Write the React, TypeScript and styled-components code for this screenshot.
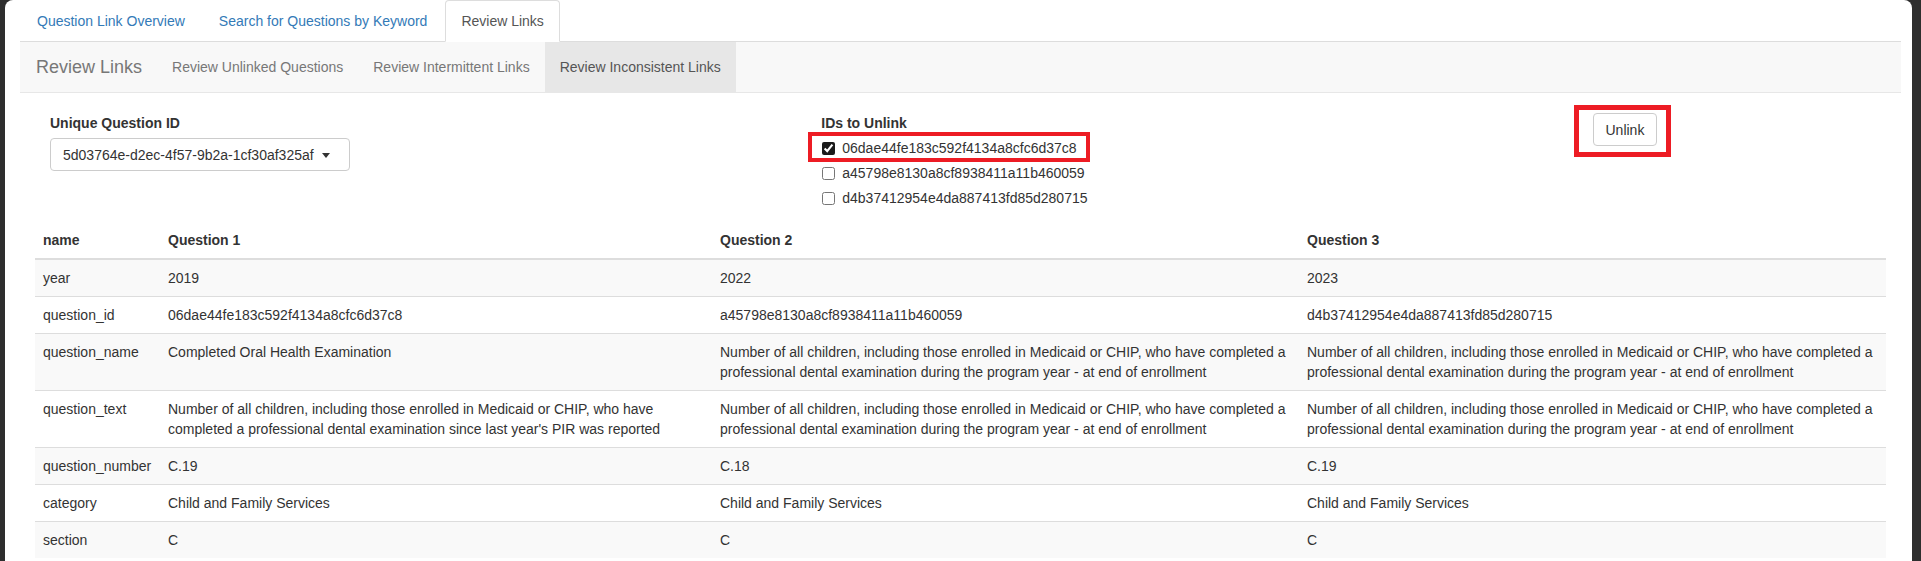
import React from "react";
import styled, { createGlobalStyle, css } from "styled-components";

const GlobalStyle = createGlobalStyle`
  html, body {
    margin: 0;
    padding: 0;
    height: 561px;
    overflow: hidden;
    background: #2e2e2e;
  }
  body {
    font-family: "Liberation Sans", Arial, Helvetica, sans-serif;
    font-size: 14px;
    line-height: 20px;
    color: #333;
  }
  * { box-sizing: border-box; }
`;

const Frame = styled.div`
  margin: 0 9px 0 5px;
  height: 561px;
  overflow: hidden;
  background: #fff;
  border-radius: 8px 8px 0 0;
  padding: 0 11px 0 15px;
`;

const TabList = styled.div`
  display: flex;
  padding-left: 1px;
  border-bottom: 1px solid #ddd;
`;

const Tab = styled.div<{ $active?: boolean }>`
  padding: 10px 15px;
  line-height: 20px;
  margin-right: 2px;
  margin-bottom: -1px;
  border: 1px solid transparent;
  border-radius: 4px 4px 0 0;
  color: #337ab7;
  white-space: nowrap;
  ${(p) =>
    p.$active &&
    css`
      color: #555;
      background: #fff;
      border-color: #ddd;
      border-bottom-color: transparent;
    `}
`;

const NavBar = styled.div`
  display: flex;
  align-items: stretch;
  margin-top: -1px;
  height: 52px;
  background: #f8f8f8;
  border-top: 1px solid #ddd;
  border-bottom: 1px solid #e7e7e7;
  padding-left: 1px;
  margin-bottom: 20px;
`;

const Brand = styled.div`
  padding: 15px;
  font-size: 18px;
  line-height: 20px;
  color: #777;
  white-space: nowrap;
`;

const NavLink = styled.div<{ $active?: boolean }>`
  padding: 15px;
  line-height: 20px;
  color: ${(p) => (p.$active ? "#555" : "#777")};
  background: ${(p) => (p.$active ? "#e7e7e7" : "transparent")};
  white-space: nowrap;
`;

const Pane = styled.div`
  padding: 0 15px;
`;

const FormRow = styled.div`
  display: grid;
  grid-template-columns: 5fr 5fr 2fr;
`;

const Col = styled.div`
  position: relative;
  padding: 0 15px;
`;

const Label = styled.div`
  font-weight: bold;
  line-height: 20px;
  margin-bottom: 5px;
  color: #333;
`;

const SelectBox = styled.div`
  width: 300px;
  height: 33px;
  display: flex;
  align-items: center;
  gap: 8px;
  padding: 0 19px 0 12px;
  border: 1px solid #ccc;
  border-radius: 4px;
  background: #fff;
  color: #333;
  white-space: nowrap;
`;

const Caret = styled.span`
  width: 0;
  height: 0;
  border-style: solid;
  border-width: 5px 4px 0 4px;
  border-color: #333 transparent transparent transparent;
  margin-top: 1px;
`;

const CheckRow = styled.label`
  display: flex;
  align-items: center;
  height: 20px;
  & + & {
    margin-top: 5px;
  }
`;

const CheckInput = styled.input`
  width: 13px;
  height: 13px;
  margin: 0 7px 0 1px;
  accent-color: #1a1a1a;
`;

const Highlight = styled.div<{ $l: number; $t: number; $w: number; $h: number; $b: number }>`
  position: absolute;
  left: ${(p) => p.$l}px;
  top: ${(p) => p.$t}px;
  width: ${(p) => p.$w}px;
  height: ${(p) => p.$h}px;
  border: ${(p) => p.$b}px solid #ed1c24;
  pointer-events: none;
`;

const Button = styled.button`
  font-family: inherit;
  font-size: 14px;
  line-height: 20px;
  padding: 6px 12px;
  height: 33px;
  color: #333;
  background: #fff;
  border: 1px solid #ccc;
  border-radius: 4px;
`;

const Table = styled.table`
  width: 100%;
  margin-top: 14px;
  border-collapse: collapse;
  table-layout: fixed;
`;

const Th = styled.th`
  text-align: left;
  font-weight: bold;
  padding: 8px;
  line-height: 20px;
  vertical-align: bottom;
  border-bottom: 2px solid #ddd;
`;

const Tr = styled.tr<{ $striped?: boolean }>`
  background: ${(p) => (p.$striped ? "#f9f9f9" : "#fff")};
`;

const Td = styled.td`
  padding: 8px;
  line-height: 20px;
  vertical-align: top;
  border-top: 1px solid #ddd;
`;

const longA =
  "Number of all children, including those enrolled in Medicaid or CHIP, who have completed a professional dental examination during the program year - at end of enrollment";

const rows: string[][] = [
  ["year", "2019", "2022", "2023"],
  [
    "question_id",
    "06dae44fe183c592f4134a8cfc6d37c8",
    "a45798e8130a8cf8938411a11b460059",
    "d4b37412954e4da887413fd85d280715",
  ],
  ["question_name", "Completed Oral Health Examination", longA, longA],
  [
    "question_text",
    "Number of all children, including those enrolled in Medicaid or CHIP, who have completed a professional dental examination since last year's PIR was reported",
    longA,
    longA,
  ],
  ["question_number", "C.19", "C.18", "C.19"],
  ["category", "Child and Family Services", "Child and Family Services", "Child and Family Services"],
  ["section", "C", "C", "C"],
];

const ids = [
  "06dae44fe183c592f4134a8cfc6d37c8",
  "a45798e8130a8cf8938411a11b460059",
  "d4b37412954e4da887413fd85d280715",
];

export default function App() {
  return (
    <>
      <GlobalStyle />
      <Frame>
        <TabList>
          <Tab>Question Link Overview</Tab>
          <Tab>Search for Questions by Keyword</Tab>
          <Tab $active>Review Links</Tab>
        </TabList>
        <NavBar>
          <Brand>Review Links</Brand>
          <NavLink>Review Unlinked Questions</NavLink>
          <NavLink>Review Intermittent Links</NavLink>
          <NavLink $active>Review Inconsistent Links</NavLink>
        </NavBar>
        <Pane>
          <FormRow>
            <Col>
              <Label>Unique Question ID</Label>
              <SelectBox>
                <span>5d03764e-d2ec-4f57-9b2a-1cf30af325af</span>
                <Caret />
              </SelectBox>
            </Col>
            <Col>
              <Label>IDs to Unlink</Label>
              {ids.map((id, i) => (
                <CheckRow key={id}>
                  <CheckInput type="checkbox" defaultChecked={i === 0} />
                  <span>{id}</span>
                </CheckRow>
              ))}
              <Highlight $l={2} $t={19} $w={282} $h={30} $b={4} />
            </Col>
            <Col>
              <Button>Unlink</Button>
              <Highlight $l={-4} $t={-8} $w={97} $h={52} $b={5} />
            </Col>
          </FormRow>
          <Table>
            <colgroup>
              <col style={{ width: 125 }} />
              <col style={{ width: 552 }} />
              <col style={{ width: 587 }} />
              <col style={{ width: 587 }} />
            </colgroup>
            <thead>
              <tr>
                <Th>name</Th>
                <Th>Question 1</Th>
                <Th>Question 2</Th>
                <Th>Question 3</Th>
              </tr>
            </thead>
            <tbody>
              {rows.map((r, i) => (
                <Tr key={r[0]} $striped={i % 2 === 0}>
                  {r.map((c, j) => (
                    <Td key={j}>{c}</Td>
                  ))}
                </Tr>
              ))}
            </tbody>
          </Table>
        </Pane>
      </Frame>
    </>
  );
}
